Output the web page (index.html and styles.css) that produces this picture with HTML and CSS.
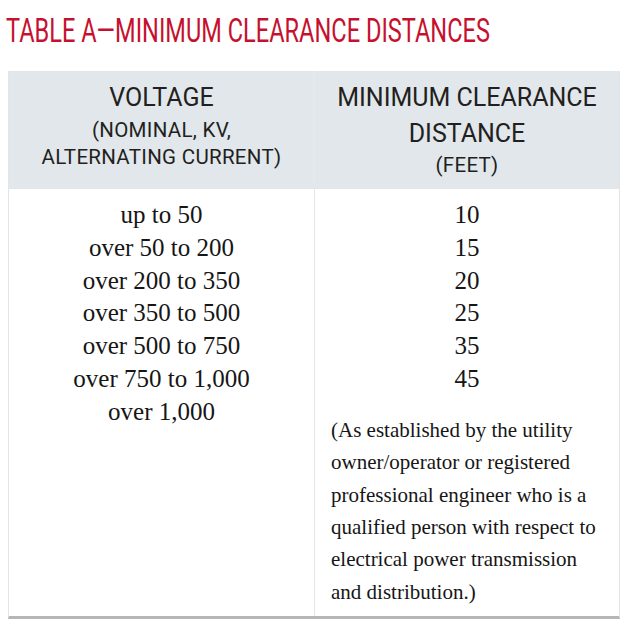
FILE: index.html
```html
<!DOCTYPE html>
<html lang="en">
<head>
<meta charset="utf-8">
<title>Table A — Minimum Clearance Distances</title>
<link rel="stylesheet" href="styles.css">
</head>
<body>
<div class="page">
  <h1 class="title"><span class="title-text">TABLE A—MINIMUM CLEARANCE DISTANCES</span></h1>
  <div class="table">
    <div class="head">
      <div class="hcell">
        <div class="h-main">VOLTAGE</div>
        <div class="h-sub">(NOMINAL, KV,<br>ALTERNATING CURRENT)</div>
      </div>
      <div class="hcell hcell-right">
        <div class="h-main h-two">MINIMUM CLEARANCE<br>DISTANCE</div>
        <div class="h-sub">(FEET)</div>
      </div>
    </div>
    <div class="body">
      <div class="bcell">
        <div class="val">up to 50</div>
        <div class="val">over 50 to 200</div>
        <div class="val">over 200 to 350</div>
        <div class="val">over 350 to 500</div>
        <div class="val">over 500 to 750</div>
        <div class="val">over 750 to 1,000</div>
        <div class="val">over 1,000</div>
      </div>
      <div class="bcell bcell-right">
        <div class="val">10</div>
        <div class="val">15</div>
        <div class="val">20</div>
        <div class="val">25</div>
        <div class="val">35</div>
        <div class="val">45</div>
        <p class="note">(As established by the utility<br>owner/operator or registered<br>professional engineer who is a<br>qualified person with respect to<br>electrical power transmission<br>and distribution.)</p>
      </div>
    </div>
  </div>
</div>
</body>
</html>
```
FILE: styles.css
```css
html, body {
  margin: 0;
  padding: 0;
  background: #ffffff;
}
.page {
  padding-left: 8px;
  width: 612px;
}
.title {
  margin: 0;
  padding: 20px 0 0 0;
  height: 71px;
  box-sizing: border-box;
  font-family: Roboto, "Liberation Sans", sans-serif;
  font-weight: 400;
  font-size: 23.6px;
  line-height: 28px;
  color: #c5112f;
  white-space: nowrap;
}
.title-text {
  display: inline-block;
  margin-left: -2px;
  transform: scaleY(1.44);
  transform-origin: left 22px;
}
.table {
  border-left: 1px solid #e2e4e6;
  border-right: 1px solid #e2e4e6;
  border-bottom: 3px solid #b6b6b8;
}
.head {
  display: grid;
  grid-template-columns: 305px 1fr;
  background: #e1e7ea;
  height: 118px;
}
.hcell {
  text-align: center;
  font-family: Roboto, "Liberation Sans", sans-serif;
  color: #231f20;
  padding-top: 12px;
}
.hcell-right {
  padding-top: 9px;
  border-left: 1px solid #e6eaec;
}
.h-main {
  font-size: 25px;
  line-height: 30px;
}
.h-two {
  line-height: 36px;
}
.h-sub {
  margin-top: 4px;
  font-size: 20.5px;
  line-height: 27px;
  letter-spacing: 0.3px;
}
.hcell-right .h-sub {
  margin-top: 0;
}
.body {
  display: grid;
  grid-template-columns: 305px 1fr;
}
.bcell {
  padding-top: 10px;
  font-family: "Liberation Serif", "Times New Roman", serif;
  color: #161616;
  text-align: center;
}
.bcell-right {
  border-left: 1px solid #e6e6e6;
}
.val {
  font-size: 25px;
  line-height: 32.8px;
}
.note {
  margin: 18px 0 0 0;
  padding: 0 4px 8px 16px;
  text-align: left;
  font-size: 21px;
  line-height: 32.4px;
}
```
